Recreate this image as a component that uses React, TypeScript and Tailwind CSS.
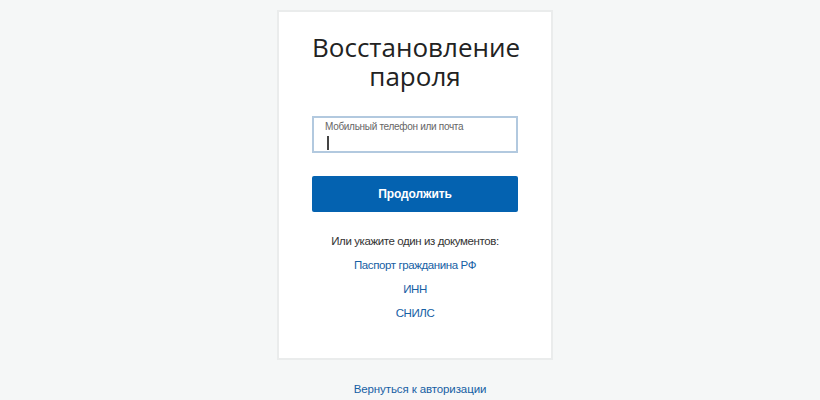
import React from 'react';

const LINKS = ['Паспорт гражданина РФ', 'ИНН', 'СНИЛС'];

export default function App(): React.JSX.Element {
  return (
    <div className="min-h-screen bg-[#f5f7f7] flex flex-col items-center pt-[10px] pl-[10px] font-['Liberation_Sans',Arial,sans-serif]">
      <div className="w-[276px] h-[350px] bg-white border-2 border-[#eaecec] px-[33px] pt-[21px] flex flex-col">
        <h1 className="text-center text-[26px] leading-[29px] text-[#222] font-['Open_Sans',sans-serif]">
          Восстановление пароля
        </h1>

        {/* Input */}
        <div className="mt-[25px] h-[37px] border-2 border-[#b2c9df] px-[11px] pt-[2px]">
          <div className="text-[10px] leading-[14px] tracking-[-0.3px] text-[#666]">Мобильный телефон или почта</div>
          <div className="mt-[2px] ml-[2px] w-[1.5px] h-[14px] bg-[#444]" />
        </div>

        <button className="mt-[23px] h-[36px] w-full rounded-[2px] bg-[#0462b0] text-white text-[12px] font-bold tracking-[-0.1px]">
          Продолжить
        </button>

        <div className="mt-[17px] text-center text-[11.5px] leading-[24px] tracking-[-0.4px] text-[#333]">
          Или укажите один из документов:
        </div>
        {LINKS.map((l) => (
          <a key={l} href="#" className="block text-center text-[11.5px] leading-[24px] tracking-[-0.4px] text-[#1660a4]">
            {l}
          </a>
        ))}
      </div>

      <a href="#" className="mt-[17px] ml-[10px] text-[11.5px] leading-[24px] tracking-[-0.1px] text-[#1660a4]">
        Вернуться к авторизации
      </a>
    </div>
  );
}
